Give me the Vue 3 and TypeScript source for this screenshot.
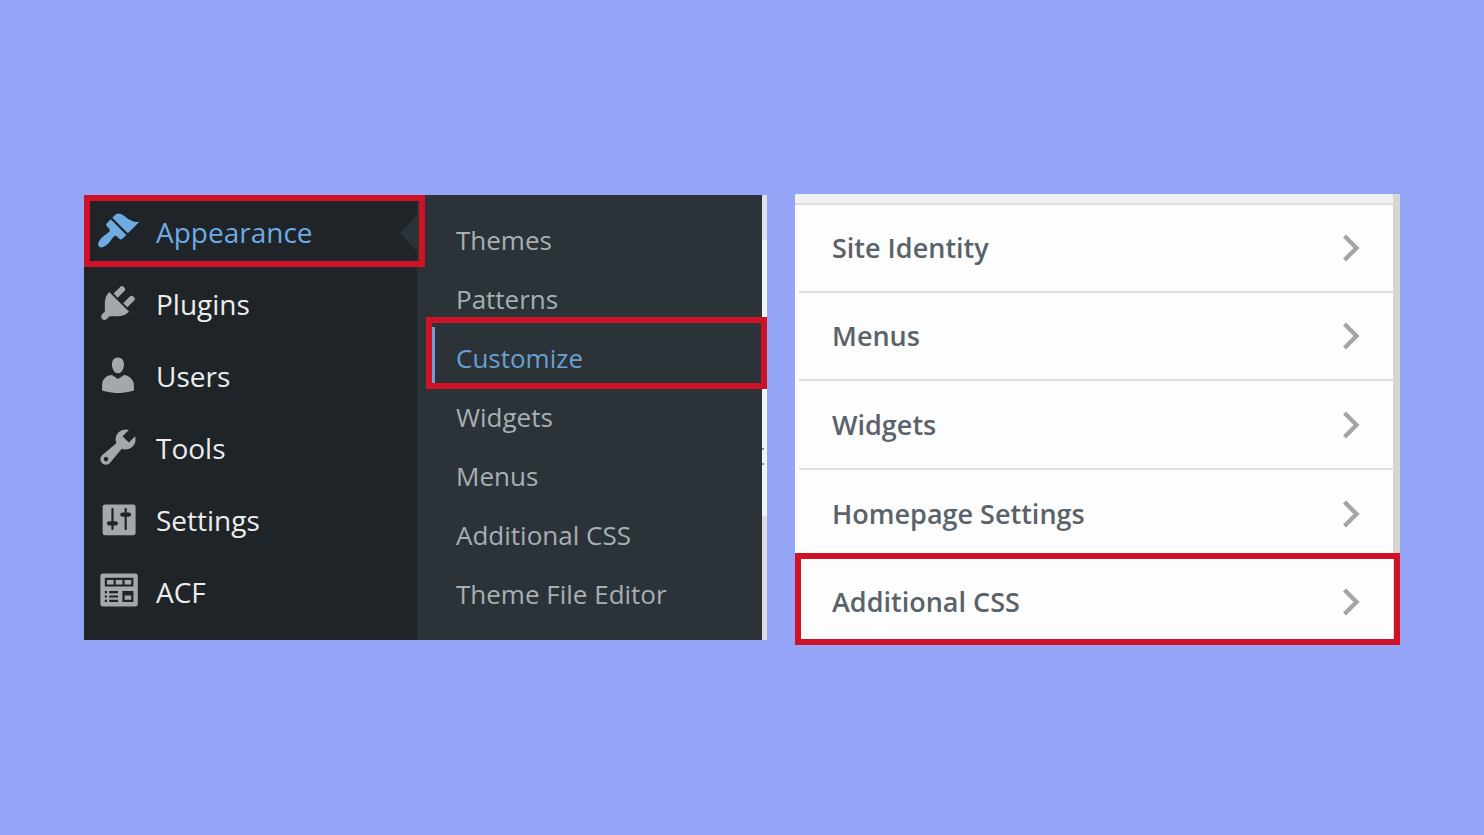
<script setup lang="ts">
interface MenuItem {
  label: string
  icon: string
  active?: boolean
}

const menuItems: MenuItem[] = [
  {
    label: 'Appearance',
    active: true,
    icon: 'M14.48 11.06L7.41 3.99l1.5-1.5c.5-.56 2.3-.47 3.51.32 1.21.8 1.43 1.28 2.91 2.1 1.18.64 2.45 1.26 4.45.85zm-.71.71L6.7 4.7 4.93 6.47c-.39.39-.39 1.02 0 1.41l1.06 1.06c.39.39.39 1.03 0 1.42-.6.6-1.43 1.11-2.21 1.69-.35.26-.7.53-1.01.84C1.43 14.23.4 16.08 1.4 17.07c.99 1 2.84-.03 4.18-1.36.31-.31.58-.66.85-1.02.57-.78 1.08-1.61 1.69-2.21.39-.39 1.02-.39 1.41 0l1.06 1.06c.39.39 1.02.39 1.41 0z'
  },
  {
    label: 'Plugins',
    icon: 'M13.11 4.36L9.87 7.6 8 5.73l3.24-3.24c.35-.34 1.05-.2 1.56.32.52.51.66 1.21.31 1.55zm-8 1.77l.91-1.12 9.01 9.01-1.19.84c-.71.71-2.63 1.16-3.82 1.16H6.14L4.9 17.26c-.59.59-1.54.59-2.12 0-.59-.58-.59-1.53 0-2.12l1.24-1.24v-3.88c0-1.13.4-3.19 1.09-3.89zm7.26 3.97l3.24-3.24c.34-.35 1.04-.21 1.55.31.52.51.66 1.21.31 1.55l-3.24 3.25z'
  },
  {
    label: 'Users',
    icon: 'M10 9.25c-2.27 0-2.73-3.44-2.73-3.44C7 4.02 7.82 2 9.97 2c2.16 0 2.98 2.02 2.71 3.81 0 0-.41 3.44-2.68 3.44zm0 2.57L12.72 10c2.39 0 4.52 2.33 4.52 4.53v2.49s-3.65 1.13-7.24 1.13c-3.65 0-7.24-1.13-7.24-1.13v-2.49c0-2.25 1.94-4.48 4.47-4.48z'
  },
  {
    label: 'Tools',
    icon: 'M16.68 9.77c-1.34 1.34-3.3 1.67-4.95.99l-5.41 6.52c-.99.99-2.59.99-3.58 0s-.99-2.59 0-3.57l6.52-5.42c-.68-1.65-.35-3.61.99-4.95 1.28-1.28 3.12-1.62 4.72-1.06l-2.89 2.89 2.82 2.82 2.86-2.87c.53 1.58.18 3.39-1.08 4.65zM3.81 16.21c.4.39 1.04.39 1.43 0 .4-.4.4-1.04 0-1.43-.39-.4-1.03-.4-1.43 0-.39.39-.39 1.03 0 1.43z'
  },
  {
    label: 'Settings',
    icon: 'M18 16.4V4.4c0-.55-.45-1-1-1H4c-.55 0-1 .45-1 1v12c0 .55.45 1 1 1h13c.55 0 1-.45 1-1zM8 11h1c.55 0 1 .45 1 1s-.45 1-1 1H8v1.5c0 .28-.22.5-.5.5s-.5-.22-.5-.5V13H6c-.55 0-1-.45-1-1s.45-1 1-1h1V5.5c0-.28.22-.5.5-.5s.5.22.5.5V11zm5-2h-1c-.55 0-1-.45-1-1s.45-1 1-1h1V5.5c0-.28.22-.5.5-.5s.5.22.5.5V7h1c.55 0 1 .45 1 1s-.45 1-1 1h-1v5.5c0 .28-.22.5-.5.5s-.5-.22-.5-.5V9z'
  },
  {
    label: 'ACF',
    icon: 'M19 16V3c0-.55-.45-1-1-1H3c-.55 0-1 .45-1 1v13c0 .55.45 1 1 1h15c.55 0 1-.45 1-1zM4 4h13v4H4zM5 5v2h3V5zM9 5v2h3V5zM13 5v2h3V5zM4 10h1v1H4zM6 10h4v1H6zM4 12h1v1H4zM6 12h4v1H6zM4 14h1v1H4zM6 14h4v1H6zM12 10h5v5h-5zM13 12v2h3v-2z'
  }
]

const submenuItems: string[] = [
  'Themes',
  'Patterns',
  'Customize',
  'Widgets',
  'Menus',
  'Additional CSS',
  'Theme File Editor'
]
const currentSubmenu = 'Customize'

const sections: string[] = ['Site Identity', 'Menus', 'Widgets', 'Homepage Settings', 'Additional CSS']
const markedSection = 'Additional CSS'
</script>

<template>
  <main class="page">
    <div class="admin">
      <nav class="menu" aria-label="Main menu">
        <a
          v-for="item in menuItems"
          :key="item.label"
          href="#"
          class="menu-item"
          :class="{ active: item.active }"
        >
          <svg class="menu-icon" viewBox="0 0 20 20" aria-hidden="true">
            <path :d="item.icon" fill="currentColor" fill-rule="evenodd" />
          </svg>
          <span class="menu-label">{{ item.label }}</span>
        </a>
      </nav>
      <nav class="submenu" aria-label="Appearance">
        <a
          v-for="label in submenuItems"
          :key="label"
          href="#"
          class="submenu-item"
          :class="{ current: label === currentSubmenu }"
        >{{ label }}</a>
      </nav>
      <div class="edge"></div>
    </div>

    <section class="customizer">
      <ul class="sections">
        <li v-for="label in sections" :key="label" class="section" :class="{ marked: label === markedSection }">
          <button type="button" class="section-button">
            <span>{{ label }}</span>
            <svg class="chevron" viewBox="0 0 18 30" aria-hidden="true">
              <path d="M2.5 3L14.5 15L2.5 27" fill="none" stroke="currentColor" stroke-width="4.4" />
            </svg>
          </button>
        </li>
      </ul>
    </section>
  </main>
</template>

<style>
body {
  margin: 0;
  background: #94a5f7;
}
</style>

<style scoped>
.page {
  box-sizing: border-box;
  min-height: 100vh;
  padding: 194px 84px;
  display: grid;
  grid-template-columns: 683fr 605fr;
  gap: 28px;
  align-items: start;
  font-family: "Open Sans", "Noto Sans", sans-serif;
}

.admin {
  display: grid;
  grid-template-columns: 333fr 345fr 5px;
  margin-top: 1px;
}

.menu {
  background: #1e2427;
  padding-bottom: 13px;
}

.menu-item {
  position: relative;
  display: flex;
  align-items: center;
  gap: 16px;
  height: 72px;
  padding-left: 12px;
  color: #ecedee;
  font-size: 28px;
  line-height: 40px;
  text-decoration: none;
}

.menu-label {
  padding-top: 2px;
}

.menu-icon {
  width: 44px;
  height: 44px;
  flex: none;
  color: #a3a8ac;
}

.menu-item.active,
.menu-item.active .menu-icon {
  color: #6fabe3;
}

.menu-item.active::before {
  content: "";
  position: absolute;
  top: 20px;
  right: 0;
  border: solid transparent;
  border-width: 18px 17px 18px 0;
  border-right-color: #2b3338;
}

.menu-item.active::after {
  content: "";
  position: absolute;
  z-index: 1;
  inset: 0 -8px 0 0;
  border: 6px solid #cf1226;
}

.submenu {
  background: #2b3338;
  padding: 15px 0 17px;
}

.submenu-item {
  position: relative;
  display: flex;
  align-items: center;
  height: 59px;
  padding-left: 39px;
  color: #a9aeb3;
  font-size: 26px;
  line-height: 36px;
  text-decoration: none;
}

.submenu-item.current {
  color: #6a9fd1;
}

.submenu-item.current::before {
  content: "";
  position: absolute;
  inset: -1px auto 3px 15px;
  width: 3px;
  background: #6f9fd6;
}

.submenu-item.current::after {
  content: "";
  position: absolute;
  z-index: 1;
  inset: -11px -5px -2px 9px;
  border: 6px solid #cf1226;
}

.edge {
  position: relative;
  background: linear-gradient(#dfe1e8 0 45px, #f1f2f6 45px 321px, #dcdcdf 321px);
}

.edge::before {
  content: "";
  position: absolute;
  top: 253px;
  left: 0;
  width: 2px;
  height: 13px;
  border: solid #7d93b5;
  border-width: 2px 0;
}

.customizer {
  background: #fdfdfd;
  border-right: 7px solid #d6d7d3;
}

.customizer::before {
  content: "";
  display: block;
  height: 9px;
  background: #f0f0f1;
  border-bottom: 2px solid #dedede;
}

.sections {
  margin: 0;
  padding: 0 0 0 4px;
  list-style: none;
  display: grid;
  grid-template-rows: 88px 88px 89px 89px 86px;
}

.section {
  position: relative;
  border-bottom: 2px solid #dedfe1;
}

.section:last-child {
  border-bottom: 0;
}

.section-button {
  box-sizing: border-box;
  width: 100%;
  height: 100%;
  padding: 0 33px;
  display: flex;
  align-items: center;
  justify-content: space-between;
  border: 0;
  background: none;
  color: #5a626a;
  font: 600 27px/40px "Open Sans", "Noto Sans", sans-serif;
  text-align: left;
}

.chevron {
  width: 18px;
  height: 30px;
  color: #a5a5a5;
}

.section.marked::after {
  content: "";
  position: absolute;
  inset: -6px -7px 0 -4px;
  border: 6px solid #cf1226;
}
</style>
